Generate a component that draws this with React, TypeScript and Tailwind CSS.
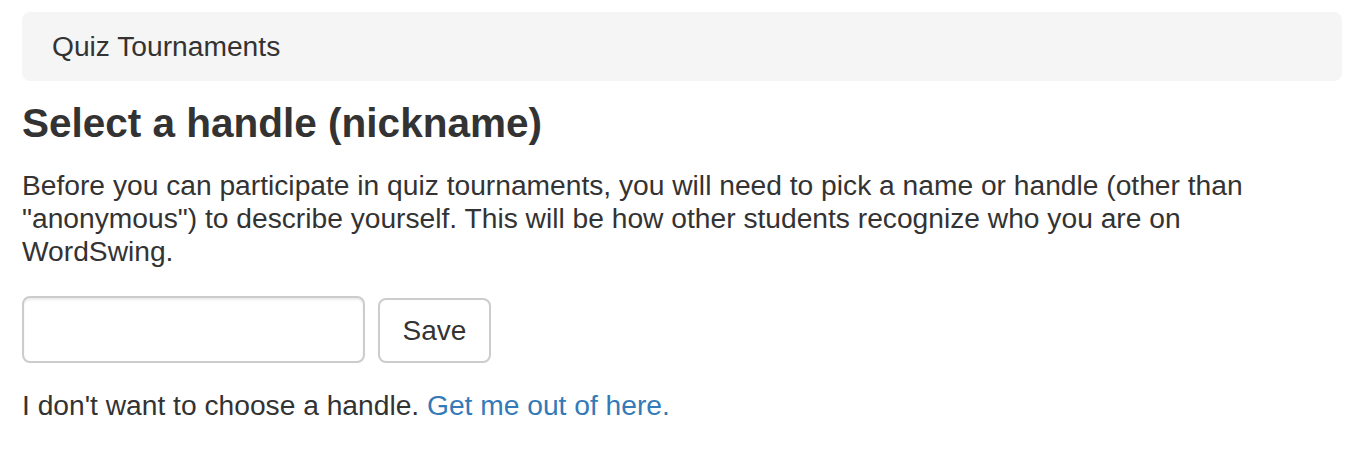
import React from "react";

export default function App() {
  return (
    <div
      className="w-[1354px] h-[462px] bg-white pl-[22px] pr-[12px] pt-[12px] text-[#333333]"
      style={{ fontFamily: '"Liberation Sans", Arial, Helvetica, sans-serif' }}
    >
      <div className="rounded-[8px] bg-[#f5f5f5] px-[30px] py-[18px] text-[28.2px] leading-[33px]">
        Quiz Tournaments
      </div>
      <h3 className="mt-[20px] text-[40.5px] font-bold leading-[44.5px]">
        Select a handle (nickname)
      </h3>
      <p className="mt-[23.5px] max-w-[1290px] text-[28.2px] leading-[33px]">
        Before you can participate in quiz tournaments, you will need to pick a name or handle (other than
        "anonymous") to describe yourself. This will be how other students recognize who you are on WordSwing.
      </p>
      <div className="mt-[28px] flex items-end gap-[13px]">
        <input
          type="text"
          className="h-[67px] w-[343px] rounded-[8px] border-[2px] border-[#cccccc] bg-white px-[20px] text-[28px] shadow-[inset_0_2px_2px_rgba(0,0,0,0.075)] outline-none"
        />
        <button className="h-[65px] w-[113px] rounded-[8px] border-[2px] border-[#cccccc] bg-white text-[28px] leading-[33px] text-[#333333]">
          Save
        </button>
      </div>
      <p className="mt-[26px] text-[28.2px] leading-[33px]">
        I don't want to choose a handle.{" "}
        <a href="#" className="text-[#337ab7]">
          Get me out of here.
        </a>
      </p>
    </div>
  );
}
